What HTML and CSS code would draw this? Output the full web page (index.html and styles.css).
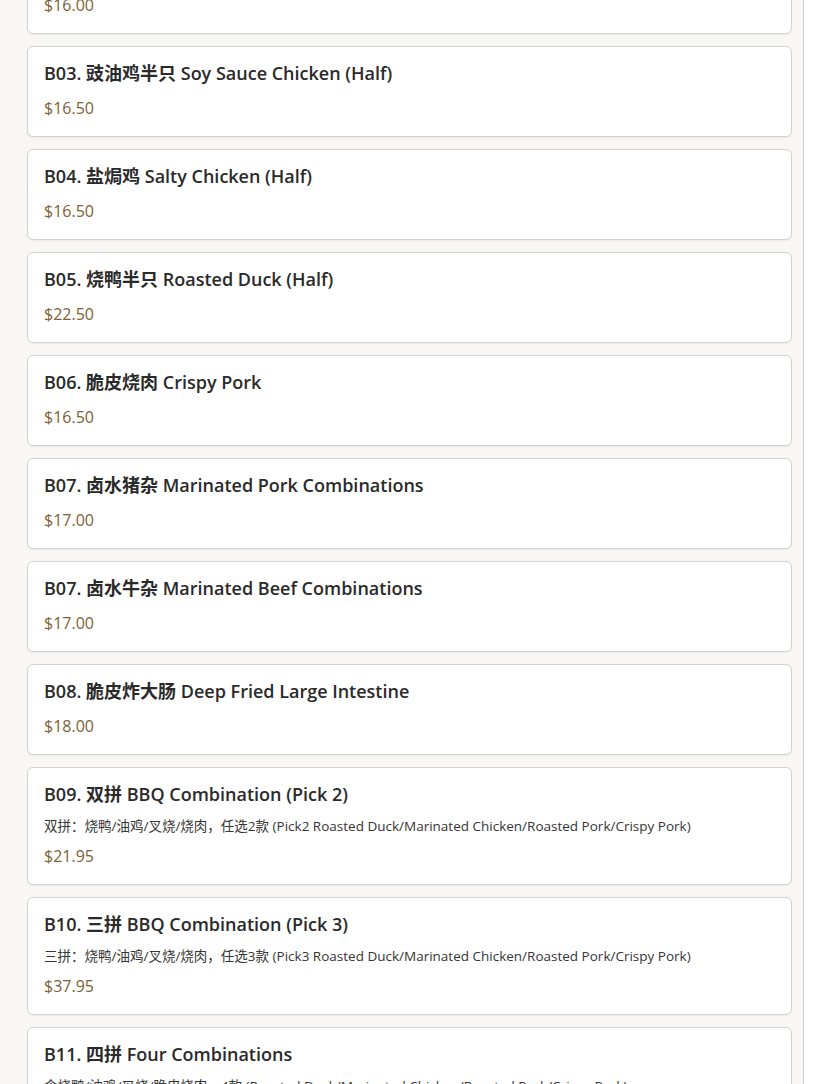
FILE: index.html
```html
<!DOCTYPE html>
<html lang="zh">
<head>
<meta charset="utf-8">
<title>Menu</title>
<link rel="stylesheet" href="styles.css">
</head>
<body>
<div class="panel">
  <div class="list">
    <div class="card">
      <div class="title">B02. 白切鸡（半） White Cut Chicken (Half)</div>
      <div class="price">$16.00</div>
    </div>
    <div class="card">
      <div class="title">B03. 豉油鸡半只 Soy Sauce Chicken (Half)</div>
      <div class="price">$16.50</div>
    </div>
    <div class="card">
      <div class="title">B04. 盐焗鸡 Salty Chicken (Half)</div>
      <div class="price">$16.50</div>
    </div>
    <div class="card">
      <div class="title">B05. 烧鸭半只 Roasted Duck (Half)</div>
      <div class="price">$22.50</div>
    </div>
    <div class="card">
      <div class="title">B06. 脆皮烧肉 Crispy Pork</div>
      <div class="price">$16.50</div>
    </div>
    <div class="card">
      <div class="title">B07. 卤水猪杂 Marinated Pork Combinations</div>
      <div class="price">$17.00</div>
    </div>
    <div class="card">
      <div class="title">B07. 卤水牛杂 Marinated Beef Combinations</div>
      <div class="price">$17.00</div>
    </div>
    <div class="card">
      <div class="title">B08. 脆皮炸大肠 Deep Fried Large Intestine</div>
      <div class="price">$18.00</div>
    </div>
    <div class="card">
      <div class="title">B09. 双拼 BBQ Combination (Pick 2)</div>
      <div class="desc">双拼：烧鸭/油鸡/叉烧/烧肉，任选2款 (Pick2 Roasted Duck/Marinated Chicken/Roasted Pork/Crispy Pork)</div>
      <div class="price">$21.95</div>
    </div>
    <div class="card">
      <div class="title">B10. 三拼 BBQ Combination (Pick 3)</div>
      <div class="desc">三拼：烧鸭/油鸡/叉烧/烧肉，任选3款 (Pick3 Roasted Duck/Marinated Chicken/Roasted Pork/Crispy Pork)</div>
      <div class="price">$37.95</div>
    </div>
    <div class="card">
      <div class="title">B11. 四拼 Four Combinations</div>
      <div class="desc">含烧鸭/油鸡/叉烧/脆皮烧肉，4款 (Roasted Duck/Marinated Chicken/Roasted Pork/Crispy Pork)</div>
      <div class="price">$45.95</div>
    </div>
  </div>
</div>
</body>
</html>
```
FILE: styles.css
```css
html, body {
  margin: 0;
  padding: 0;
  background: #ffffff;
  height: 100%;
  overflow: hidden;
}

body {
  font-family: "Open Sans", "Noto Sans", "Noto Sans CJK SC", sans-serif;
  color: #2b2b2b;
}

.panel {
  box-sizing: content-box;
  width: 765px;
  min-height: 100%;
  padding: 0 11px 0 27px;
  background: #f8f7f5;
  border-right: 1px solid #cfcfcf;
}

.list {
  display: flex;
  flex-direction: column;
  gap: 12px;
  margin-top: -57px;
}

.card {
  display: flex;
  flex-direction: column;
  padding: 16px 16px 17px 16px;
  background: #ffffff;
  border: 1px solid #d2d2d2;
  border-radius: 6px;
  box-shadow: 0 1px 2px rgba(0, 0, 0, 0.06);
}

.title {
  font-size: 18px;
  font-weight: 600;
  line-height: 20px;
  color: #2a2a2a;
  white-space: nowrap;
}

.desc {
  margin-top: 13px;
  font-size: 13.5px;
  line-height: 18px;
  color: #353535;
  white-space: nowrap;
}

.price {
  margin-top: 14px;
  font-size: 16px;
  line-height: 22px;
  color: #7b6136;
}

.desc + .price {
  margin-top: 10px;
}
```
